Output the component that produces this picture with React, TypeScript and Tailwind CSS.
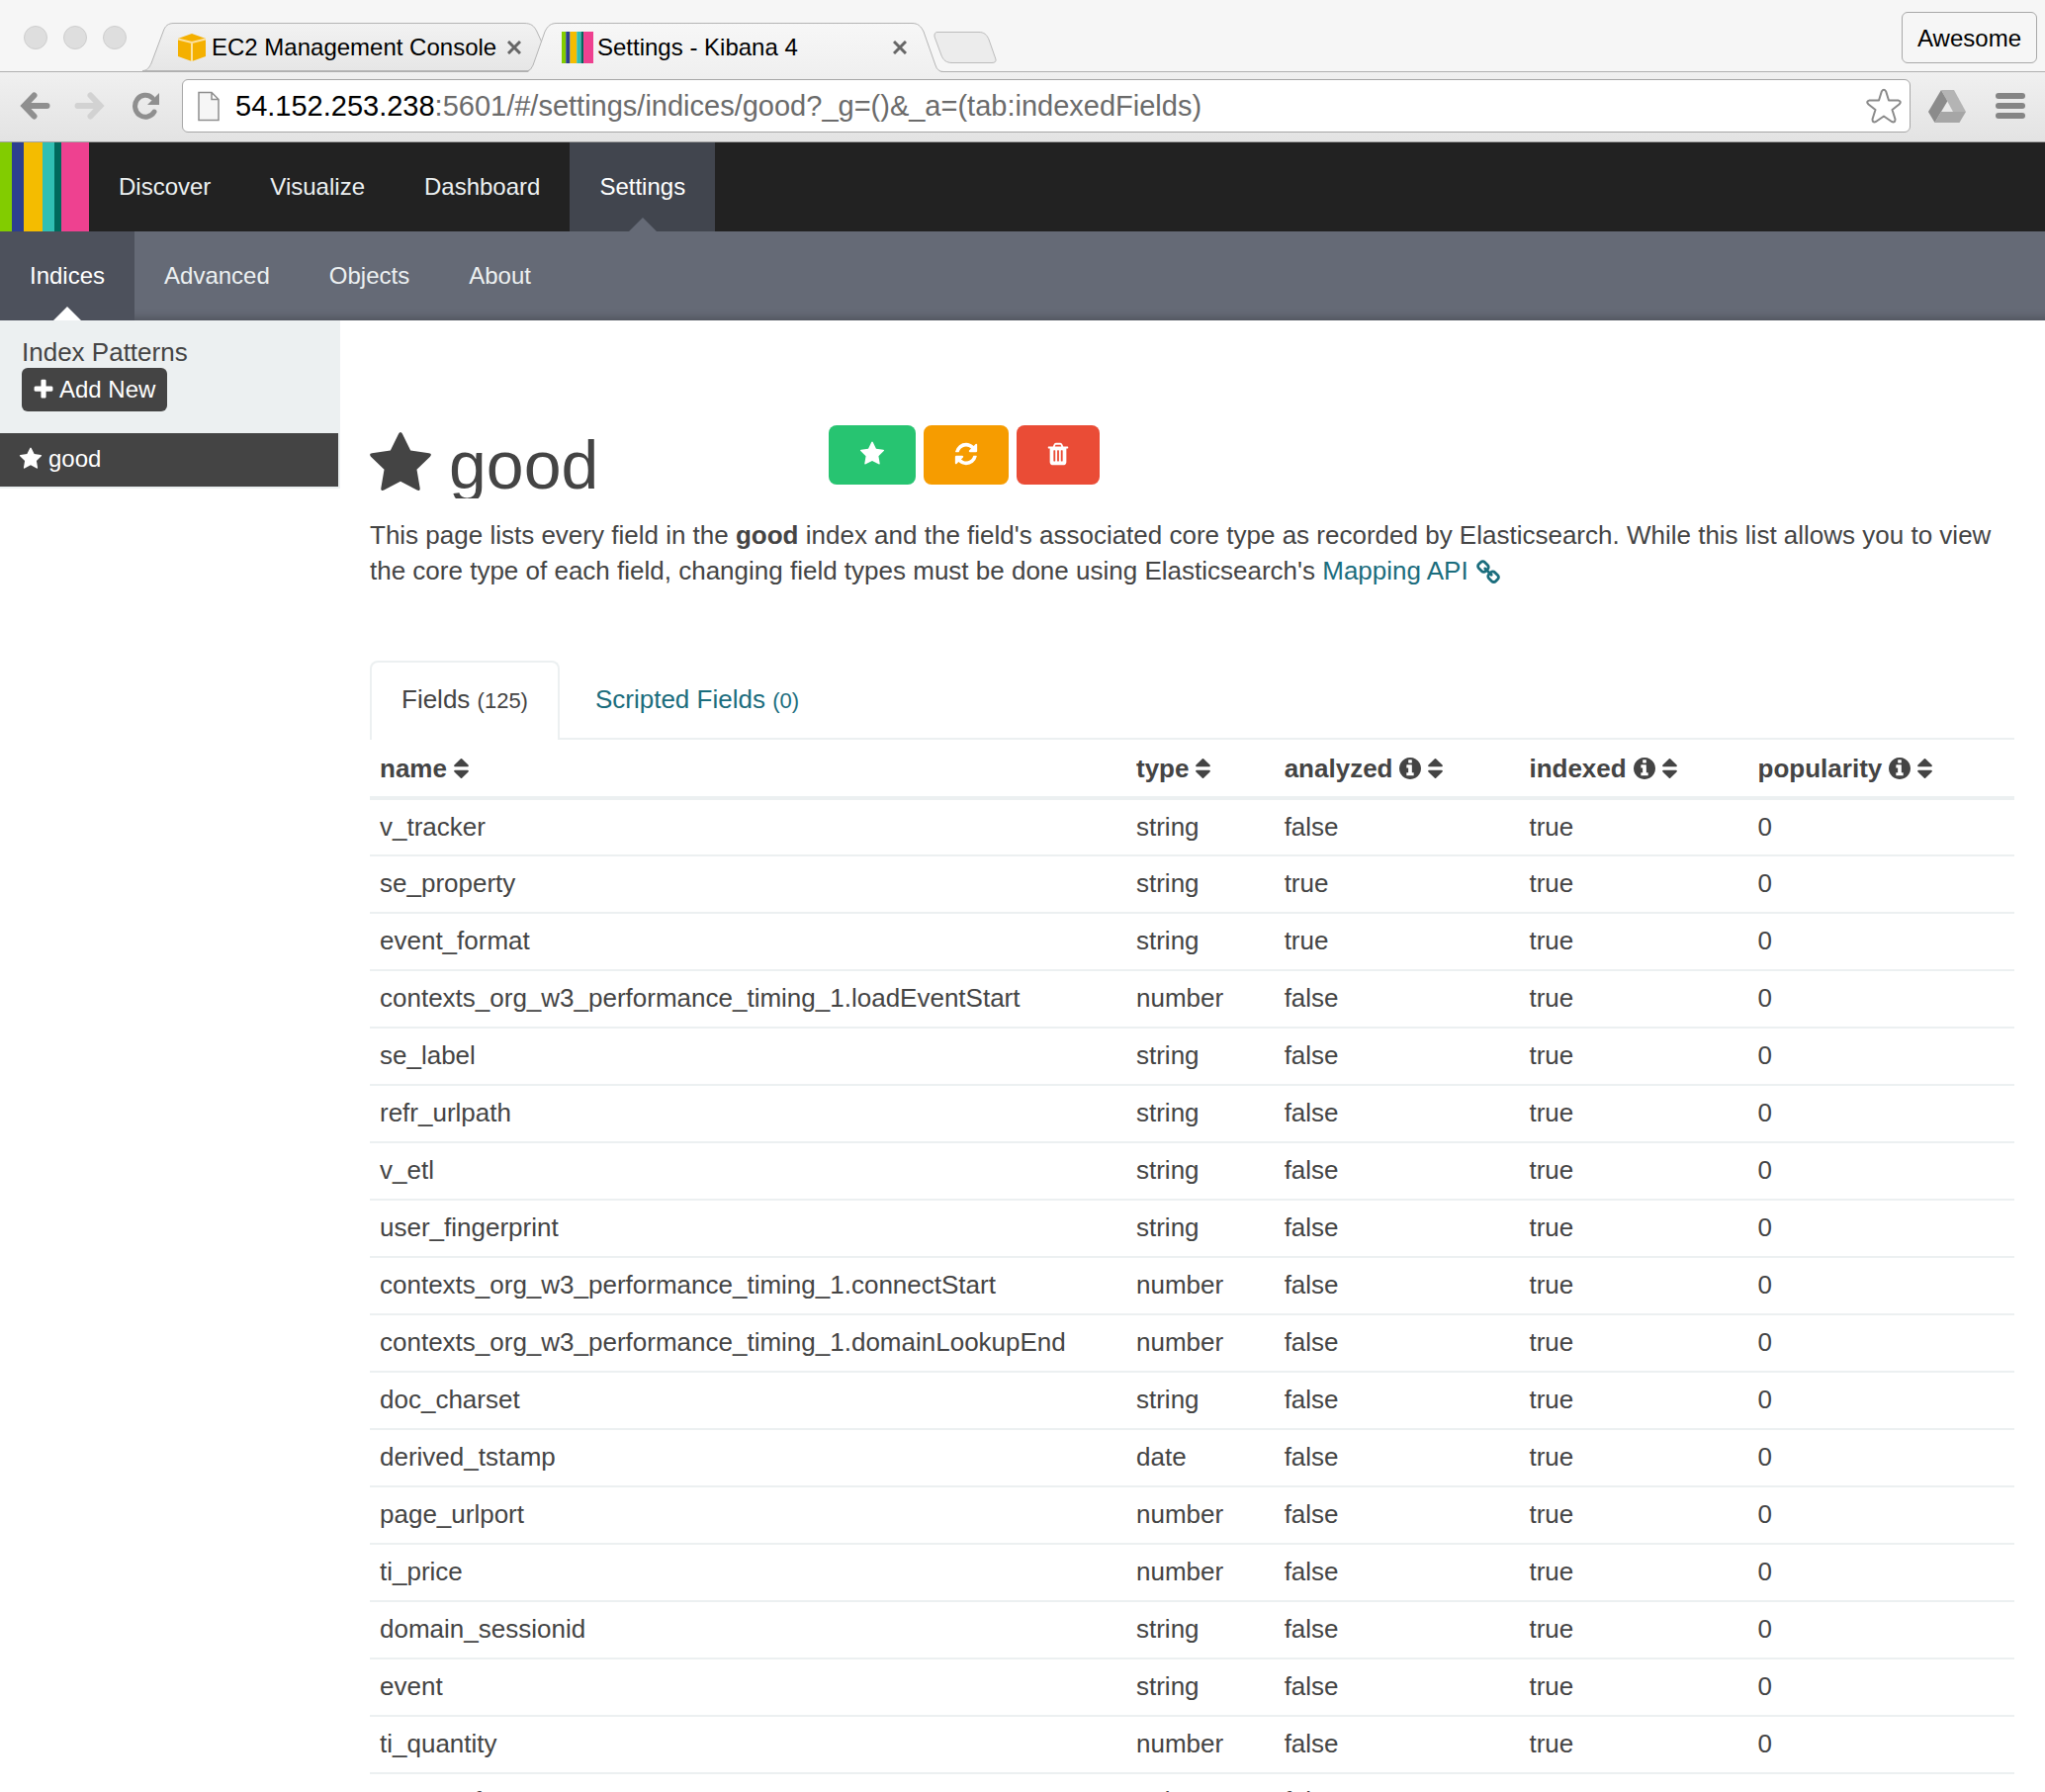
import React from "react";

const paths = {
  star: "M1728 647q0 22-26 48l-363 354 86 500q1 7 1 20 0 21-10.5 35.5t-30.5 14.5q-19 0-40-12l-449-236-449 236q-22 12-40 12-21 0-31.5-14.5t-10.5-35.5q0-6 2-20l86-500-364-354q-25-27-25-48 0-37 56-46l502-73 225-455q19-41 49-41t49 41l225 455 502 73q56 9 56 46z",
  trash: "M704 1376v-704q0-14-9-23t-23-9h-64q-14 0-23 9t-9 23v704q0 14 9 23t23 9h64q14 0 23-9t9-23zm256 0v-704q0-14-9-23t-23-9h-64q-14 0-23 9t-9 23v704q0 14 9 23t23 9h64q14 0 23-9t9-23zm256 0v-704q0-14-9-23t-23-9h-64q-14 0-23 9t-9 23v704q0 14 9 23t23 9h64q14 0 23-9t9-23zm-544-992h448l-48-117q-7-9-17-11h-317q-10 2-17 11zm928 32v64q0 14-9 23t-23 9h-96v948q0 83-47 143.5t-113 60.5h-832q-66 0-113-58.5t-47-141.5v-952h-96q-14 0-23-9t-9-23v-64q0-14 9-23t23-9h309l70-167q15-37 54-63t79-26h320q40 0 79 26t54 63l70 167h309q14 0 23 9t9 23z",
  refresh: "M1639 1056q0 5-1 7-64 268-268 434.5t-478 166.5q-146 0-282.5-55t-243.5-157l-129 129q-19 19-45 19t-45-19-19-45v-448q0-26 19-45t45-19h448q26 0 45 19t19 45-19 45l-137 137q71 66 161 102t187 36q134 0 250-65t186-179q11-17 53-117 8-23 30-23h192q13 0 22.5 9.5t9.5 22.5zm25-800v448q0 26-19 45t-45 19h-448q-26 0-45-19t-19-45 19-45l138-138q-148-137-349-137-134 0-250 65t-186 179q-11 17-53 117-8 23-30 23h-199q-13 0-22.5-9.5t-9.5-22.5v-7q65-268 270-434.5t480-166.5q146 0 284 55.5t245 156.5l130-129q19-19 45-19t45 19 19 45z",
  info: "M1152 1376v-160q0-14-9-23t-23-9h-96v-512q0-14-9-23t-23-9h-320q-14 0-23 9t-9 23v160q0 14 9 23t23 9h96v320h-96q-14 0-23 9t-9 23v160q0 14 9 23t23 9h448q14 0 23-9t9-23zm-128-896v-160q0-14-9-23t-23-9h-192q-14 0-23 9t-9 23v160q0 14 9 23t23 9h192q14 0 23-9t9-23zm640 416q0 209-103 385.5t-279.5 279.5-385.5 103-385.5-103-279.5-279.5-103-385.5 103-385.5 279.5-279.5 385.5-103 385.5 103 279.5 279.5 103 385.5z",
  plus: "M1600 736v192q0 40-28 68t-68 28h-416v416q0 40-28 68t-68 28h-192q-40 0-68-28t-28-68v-416h-416q-40 0-68-28t-28-68v-192q0-40 28-68t68-28h416v-416q0-40 28-68t68-28h192q40 0 68 28t28 68v416h416q40 0 68 28t28 68z",
  sort: "M1408 1088q0 26-19 45l-448 448q-19 19-45 19t-45-19l-448-448q-19-19-19-45t19-45 45-19h896q26 0 45 19t19 45zm0-384q0 26-19 45t-45 19h-896q-26 0-45-19t-19-45 19-45l448-448q19-19 45-19t45 19l448 448q19 19 19 45z",
  link: "M1520 1216q0-40-28-68l-208-208q-28-28-68-28-42 0-72 32 3 3 19 18.5t21.5 21.5 15 19 13 25.5 3.5 27.5q0 40-28 68t-68 28q-15 0-27.5-3.5t-25.5-13-19-15-21.5-21.5-18.5-19q-33 31-33 73 0 40 28 68l206 207q27 27 68 27 40 0 68-26l147-146q28-28 28-67zm-703-705q0-40-28-68l-206-207q-28-28-68-28-39 0-68 27l-147 146q-28 28-28 67 0 40 28 68l208 208q27 27 68 27 42 0 72-31-3-3-19-18.5t-21.5-21.5-15-19-13-25.5-3.5-27.5q0-40 28-68t68-28q15 0 27.5 3.5t25.5 13 19 15 21.5 21.5 18.5 19q33-31 33-73zm895 705q0 120-85 203l-147 146q-83 83-203 83-121 0-204-85l-206-207q-83-83-83-203 0-123 88-209l-88-88q-86 88-208 88-120 0-204-84l-208-208q-84-84-84-204t85-203l147-146q83-83 203-83 121 0 204 85l206 207q83 83 83 203 0 123-88 209l88 88q86-88 208-88 120 0 204 84l208 208q84 84 84 204z",
};

function Icon({ name, className, box = "0 0 1792 1792" }: { name: keyof typeof paths; className: string; box?: string }) {
  return (
    <svg viewBox={box} className={className} fill="currentColor" aria-hidden="true">
      <path d={paths[name]} />
    </svg>
  );
}

function KibanaMark({ className }: { className: string }) {
  return (
    <svg viewBox="0 0 90 90" preserveAspectRatio="none" className={className} aria-hidden="true">
      <rect width="12" height="90" fill="#82cc00" />
      <rect x="12" width="12" height="90" fill="#2c3f8f" />
      <rect x="24" width="19" height="90" fill="#f4bc00" />
      <rect x="43" width="12" height="90" fill="#30bfb3" />
      <rect x="55" width="7" height="90" fill="#00695c" />
      <rect x="62" width="28" height="90" fill="#ee4190" />
    </svg>
  );
}

function CloseButton({ label }: { label: string }) {
  return (
    <button aria-label={label} className="flex size-6 items-center justify-center">
      <svg viewBox="0 0 14 14" className="size-3.5" stroke="#666" strokeWidth="3" aria-hidden="true">
        <path d="M1 1L13 13M13 1L1 13" />
      </svg>
    </button>
  );
}

function TabStrip() {
  return (
    <div className="flex h-[72px] items-end bg-[#f6f6f6]">
      <div className="flex h-full w-36 shrink-0 items-center gap-4 pt-1 pl-6">
        {["Close window", "Minimize window", "Zoom window"].map((l) => (
          <button key={l} aria-label={l} className="size-6 shrink-0 rounded-full border border-[#cecece] bg-[#dedede]" />
        ))}
      </div>
      <div className="relative h-[49px] w-[404px] shrink-0">
        <svg viewBox="0 0 404 49" className="absolute inset-0 overflow-visible" aria-hidden="true">
          <defs>
            <linearGradient id="idle" x1="0" y1="0" x2="0" y2="1">
              <stop offset="0" stopColor="#f2f2f2" />
              <stop offset="1" stopColor="#e6e6e6" />
            </linearGradient>
          </defs>
          <path d="M0 48.5C5 48.5 7 45 9 41L21 9C23 3 26 .5 32 .5H386C393 .5 396 3 399 9L404 20L396 43Q394 48.5 390 48.5Z" fill="url(#idle)" stroke="#b5b5b5" />
        </svg>
        <div className="relative flex h-full items-center pl-9">
          <svg viewBox="0 0 28 28" className="size-7 shrink-0" aria-hidden="true">
            <path d="M0 5L14 0L28 5V23L14 28L0 23Z" fill="#f4b000" />
            <path d="M0 5.500L14 9L28 5.500M14 9V28" fill="none" stroke="#fce2a0" strokeWidth="2" />
          </svg>
          <span className="ml-1.5 w-[294px] text-2xl whitespace-nowrap text-black">EC2 Management Console</span>
          <CloseButton label="Close EC2 Management Console" />
        </div>
      </div>
      <div className="relative z-10 -mb-px h-[50px] w-[396px] shrink-0">
        <svg viewBox="0 0 396 50" className="absolute inset-0 overflow-visible" aria-hidden="true">
          <defs>
            <linearGradient id="active" x1="0" y1="0" x2="0" y2="1">
              <stop offset="0" stopColor="#f7f7f7" />
              <stop offset="1" stopColor="#f0f0f0" />
            </linearGradient>
          </defs>
          <path d="M-14 50L-9 43L3 9C6 3 9 .5 15 .5H374C380 .5 383 3 386 9L398 43Q400 49 405 50Z" fill="url(#active)" />
          <path d="M-15 49.500Q-11 48 -9 43L3 9C6 3 9 .5 15 .5H374C380 .5 383 3 386 9L398 43Q400 49.500 406 49.500" fill="none" stroke="#b5b5b5" />
        </svg>
        <div className="relative flex h-full items-center pl-5">
          <KibanaMark className="size-8 shrink-0" />
          <span className="ml-1 w-[294px] text-2xl whitespace-nowrap text-black">Settings - Kibana 4</span>
          <CloseButton label="Close Settings - Kibana 4" />
        </div>
      </div>
      <button aria-label="New tab" className="mb-2 shrink-0">
        <svg viewBox="0 0 64 32" className="h-8 w-16 overflow-visible" aria-hidden="true">
          <path d="M4 .5H46C51 .5 54 3 56 8L63 28Q63.500 31.500 59 31.500H19C13 31.500 10 29 8 24L1 5Q.5 .5 4 .5Z" fill="#ececec" stroke="#bcbcbc" />
        </svg>
      </button>
      <button className="mr-2 mb-2 ml-auto h-[52px] rounded-md border border-[#a9a9a9] bg-[#f6f6f6] px-[15px] pt-0.5 text-2xl text-black">
        Awesome
      </button>
    </div>
  );
}

function Toolbar() {
  return (
    <div className="flex h-[72px] items-center border-t border-b border-t-[#b0b0b0] border-b-[#a3a3a3] bg-linear-to-b from-[#f0f0f0] to-[#e3e3e3] pb-0.5 pl-5">
      <button aria-label="Back">
        <svg viewBox="0 0 30 28" className="h-7 w-[31px]" fill="none" stroke="#8f8f8f" strokeWidth="6" strokeLinecap="round" aria-hidden="true">
          <path d="M14 3.500L4 14L14 24.500M6 14H27" />
        </svg>
      </button>
      <button aria-label="Forward" className="ml-6">
        <svg viewBox="0 0 30 28" className="h-7 w-[31px]" fill="none" stroke="#d2d2d2" strokeWidth="6" strokeLinecap="round" aria-hidden="true">
          <path d="M16 3.500L26 14L16 24.500M24 14H3" />
        </svg>
      </button>
      <button aria-label="Reload" className="ml-7">
        <svg viewBox="0 0 28 28" className="size-7" aria-hidden="true">
          <path d="M22 20A10.500 11 0 1 1 20 6" fill="none" stroke="#8f8f8f" strokeWidth="5" strokeLinecap="round" />
          <path d="M27 1V13H15Z" fill="#8f8f8f" />
        </svg>
      </button>
      <div className="ml-[22px] flex h-[54px] min-w-0 grow items-center rounded-md border border-[#a6a6a6] bg-white pl-[15px]">
        <svg viewBox="0 0 22 30" className="h-[31px] w-[22px] shrink-0" fill="#f6f6f6" stroke="#8e8e8e" strokeWidth="1.500" aria-hidden="true">
          <path d="M1 1H14L21 8V29H1ZM14 1V8H21" />
        </svg>
        <p className="ml-4 grow truncate pt-0.5 text-[29px] text-[#6b6b6b]">
          <span className="text-black">54.152.253.238</span>:5601/#/settings/indices/good?_g=()&amp;_a=(tab:indexedFields)
        </p>
        <button aria-label="Bookmark this page" className="mr-2">
          <svg viewBox="0 0 36 36" className="size-9" fill="white" stroke="#8a8a8a" strokeWidth="2" strokeLinejoin="round" aria-hidden="true">
            <path d="M15.800 3.500Q18 0 20.200 3.500L23 12.500H32.500Q36.500 13.500 33.500 16.500L26.500 22L29.500 31.500Q29.500 35.500 26 34L18 28.500L10 34Q6.500 35.500 6.500 31.500L9.500 22L2.500 16.500Q-.500 13.500 3.500 12.500H13Z" />
          </svg>
        </button>
      </div>
      <button aria-label="Google Drive" className="ml-[18px]">
        <svg viewBox="0 0 38 33" className="h-[33px] w-[38px]" aria-hidden="true">
          <path d="M13 0L19.500 11L6.500 33L0 22Z" fill="#8b8b8b" />
          <path d="M13 0H26L38 22H25Z" fill="#b4b4b4" />
          <path d="M13 22H38L31.500 33H6.500Z" fill="#a6a6a6" />
        </svg>
      </button>
      <button aria-label="Menu" className="mr-5 ml-[30px] flex w-[30px] flex-col gap-1">
        <span className="h-1.5 rounded-full bg-[#858585]" />
        <span className="h-1.5 rounded-full bg-[#858585]" />
        <span className="h-1.5 rounded-full bg-[#858585]" />
      </button>
    </div>
  );
}

function MainNav() {
  return (
    <nav aria-label="Main" className="flex h-[90px] bg-[#222] text-2xl text-[#ecf0f1]">
      <a href="#/" aria-label="Kibana">
        <KibanaMark className="size-[90px]" />
      </a>
      {["Discover", "Visualize", "Dashboard"].map((l) => (
        <a key={l} href="#/" className="flex items-center px-[30px]">
          {l}
        </a>
      ))}
      <a href="#/settings" aria-current="page" className="relative flex items-center bg-[#41454e] px-[30px] text-white">
        Settings
        <span className="absolute bottom-0 left-1/2 -translate-x-1/2 border-x-14 border-b-14 border-x-transparent border-b-[#656a76]" />
      </a>
    </nav>
  );
}

function SubNav() {
  return (
    <nav aria-label="Settings" className="flex h-[90px] bg-[#656a76] text-2xl text-[#ecf0f1] shadow-[inset_0_-12px_10px_-10px_rgba(0,0,0,0.25)]">
      <a href="#/settings/indices" aria-current="page" className="relative flex items-center bg-[#4d515c] px-[30px] text-white">
        Indices
        <span className="absolute bottom-0 left-1/2 -translate-x-1/2 border-x-14 border-b-14 border-x-transparent border-b-white" />
      </a>
      {["Advanced", "Objects", "About"].map((l) => (
        <a key={l} href="#/settings" className="flex items-center px-[30px]">
          {l}
        </a>
      ))}
    </nav>
  );
}

function Sidebar() {
  return (
    <aside className="w-[344px] shrink-0 self-start bg-[#ecf0f1] pr-0.5 pb-0.5">
      <div className="h-[114px] pt-4 pl-[22px]">
        <h2 className="text-[26px] leading-8">Index Patterns</h2>
        <button className="flex h-11 items-center gap-1 rounded-md bg-[#444] pr-3 pl-2.5 text-2xl text-white">
          <Icon name="plus" className="size-6" />
          Add New
        </button>
      </div>
      <a href="#/settings/indices/good" className="flex h-[54px] items-center gap-1.5 bg-[#444] pb-0.5 pl-[19px] text-2xl text-white">
        <Icon name="star" className="size-6" />
        good
      </a>
    </aside>
  );
}

const rows: [string, string, string][] = [
  ["v_tracker", "string", "false"],
  ["se_property", "string", "true"],
  ["event_format", "string", "true"],
  ["contexts_org_w3_performance_timing_1.loadEventStart", "number", "false"],
  ["se_label", "string", "false"],
  ["refr_urlpath", "string", "false"],
  ["v_etl", "string", "false"],
  ["user_fingerprint", "string", "false"],
  ["contexts_org_w3_performance_timing_1.connectStart", "number", "false"],
  ["contexts_org_w3_performance_timing_1.domainLookupEnd", "number", "false"],
  ["doc_charset", "string", "false"],
  ["derived_tstamp", "date", "false"],
  ["page_urlport", "number", "false"],
  ["ti_price", "number", "false"],
  ["domain_sessionid", "string", "false"],
  ["event", "string", "false"],
  ["ti_quantity", "number", "false"],
  ["page_referrer", "string", "false"],
];

const columns = [
  { label: "name", info: false, width: "w-[46%]" },
  { label: "type", info: false, width: "w-[9%]" },
  { label: "analyzed", info: true, width: "w-[14.9%]" },
  { label: "indexed", info: true, width: "w-[13.9%]" },
  { label: "popularity", info: true, width: "w-[16.2%]" },
];

function FieldsTable() {
  return (
    <table className="w-full table-fixed border-collapse text-[26px] leading-9">
      <thead>
        <tr className="h-[59px] border-b-4 border-[#ecf0f1]">
          {columns.map((c) => (
            <th key={c.label} scope="col" className={`${c.width} px-2.5 text-left font-bold`}>
              <button className="flex items-center gap-[7px]">
                {c.label}
                {c.info && <Icon name="info" box="128 128 1536 1536" className="size-[22px]" />}
                <Icon name="sort" box="384 128 1024 1536" className="h-[22px] w-[15px]" />
              </button>
            </th>
          ))}
        </tr>
      </thead>
      <tbody>
        {rows.map(([name, type, analyzed]) => (
          <tr key={name} className="h-[58px] border-b-2 border-[#ecf0f1]">
            <td className="px-2.5 pb-0.5">{name}</td>
            <td className="px-2.5 pb-0.5">{type}</td>
            <td className="px-2.5 pb-0.5">{analyzed}</td>
            <td className="px-2.5 pb-0.5">true</td>
            <td className="px-2.5 pb-0.5">0</td>
          </tr>
        ))}
      </tbody>
    </table>
  );
}

function IndexPage() {
  return (
    <main className="min-w-0 grow pt-[106px] pr-[31px] pl-[30px]">
      <div className="flex h-[74px]">
        <h1 className="flex w-[464px] items-start overflow-hidden text-[68px] leading-[80px]">
          <Icon name="star" box="64 32 1664 1587" className="mt-[7px] mr-[18px] h-[59px] w-[62px]" />
          good
        </h1>
        <div className="flex h-[60px] gap-2 text-white">
          <button aria-label="Set as default index" className="flex w-[88px] items-center justify-center rounded-lg bg-[#27c471] pb-0.5">
            <Icon name="star" className="size-6.5" />
          </button>
          <button aria-label="Reload field list" className="flex w-[86px] items-center justify-center rounded-lg bg-[#f69c00] pb-0.5">
            <Icon name="refresh" className="size-6.5" />
          </button>
          <button aria-label="Remove index pattern" className="flex w-[84px] items-center justify-center rounded-lg bg-[#ea4c36] pb-0.5">
            <Icon name="trash" className="size-6.5" />
          </button>
        </div>
      </div>
      <p className="mt-[19px] text-[26px] leading-9">
        This page lists every field in the <strong>good</strong> index and the field's associated core type as recorded by
        Elasticsearch. While this list allows you to view the core type of each field, changing field types must be done using
        Elasticsearch's{" "}
        <a href="#/mapping" className="text-[#1b6d7d]">
          Mapping API <Icon name="link" className="inline size-6.5 align-text-bottom" />
        </a>
      </p>
      <div role="tablist" className="mt-[73px] flex h-20 border-b-2 border-[#ecf0f1] text-[26px]">
        <button role="tab" aria-selected="true" className="-mb-0.5 rounded-t-lg border-2 border-b-0 border-[#ecf0f1] bg-white px-[30px] pb-1">
          Fields <span className="text-[22px]">(125)</span>
        </button>
        <button role="tab" aria-selected="false" className="px-9 text-[#1b6d7d]">
          Scripted Fields <span className="text-[22px]">(0)</span>
        </button>
      </div>
      <FieldsTable />
    </main>
  );
}

export default function App() {
  return (
    <div className="h-screen overflow-hidden bg-white font-['Liberation_Sans',Arial,sans-serif] text-[#444]">
      <TabStrip />
      <Toolbar />
      <MainNav />
      <SubNav />
      <div className="flex">
        <Sidebar />
        <IndexPage />
      </div>
    </div>
  );
}
